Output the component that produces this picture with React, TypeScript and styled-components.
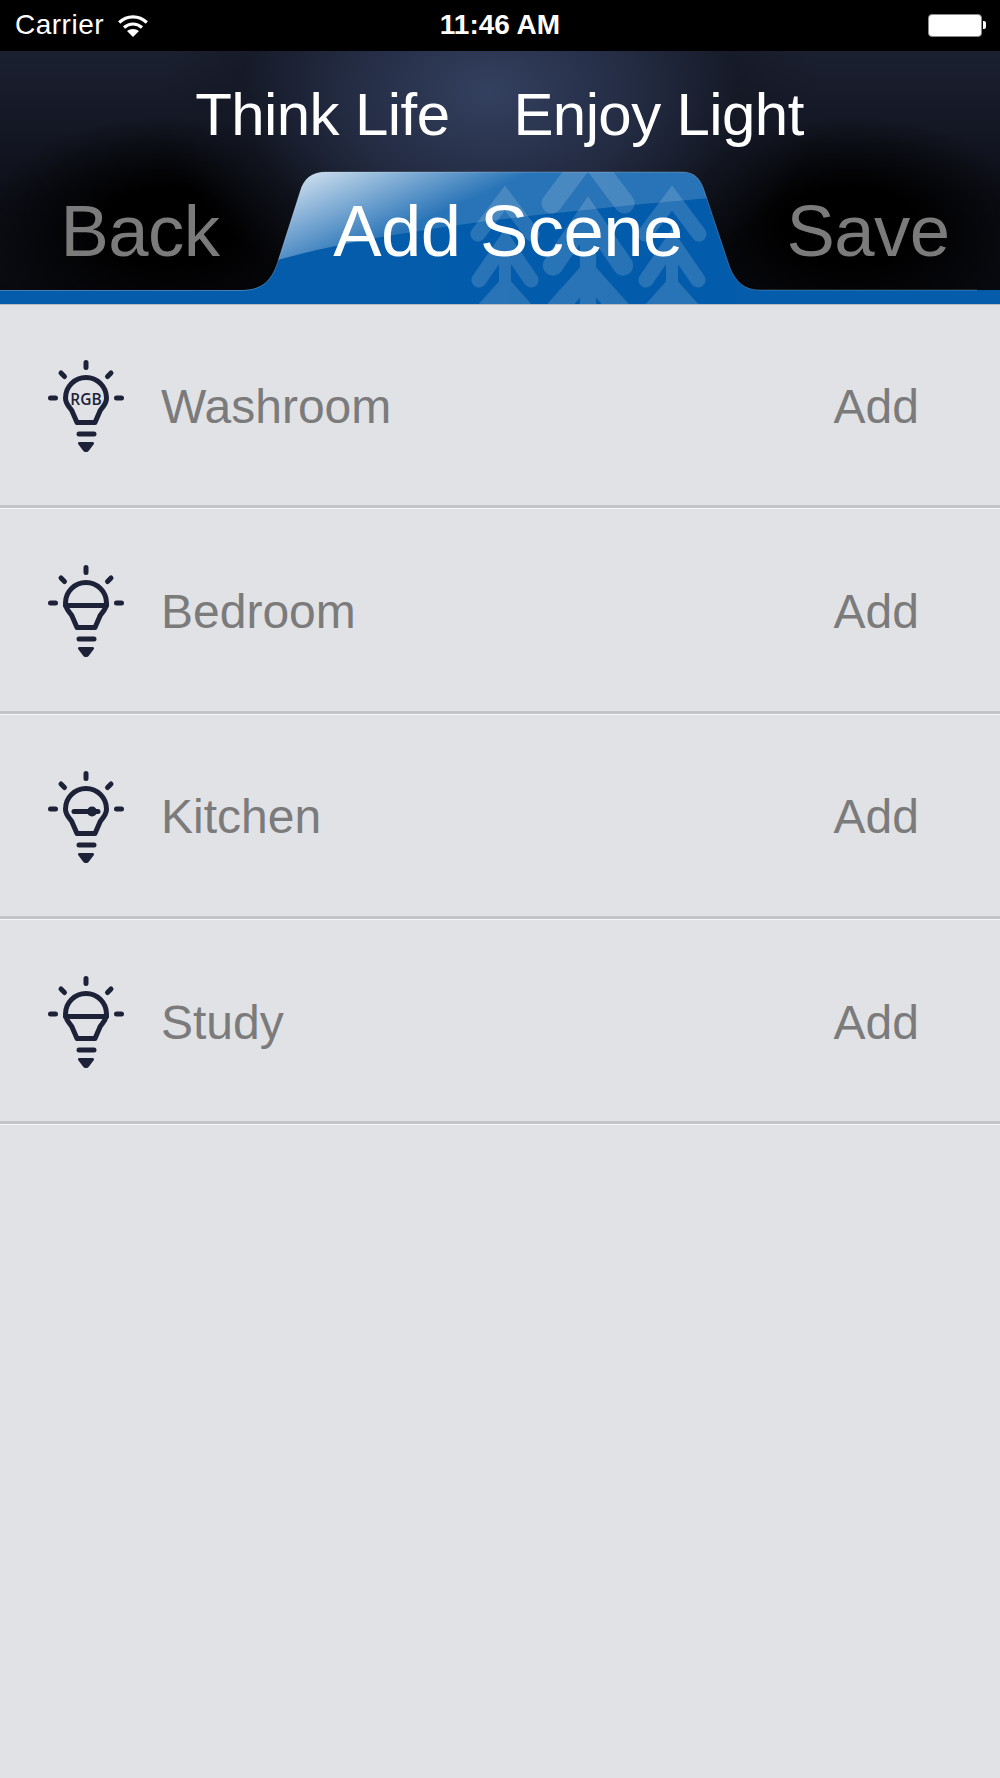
import styled, { createGlobalStyle } from "styled-components";

const GlobalStyle = createGlobalStyle`
  html, body {
    margin: 0;
    padding: 0;
    background: #e1e2e6;
    font-family: "Liberation Sans", Arial, sans-serif;
  }
`;

const Page = styled.div`
  width: 1000px;
  height: 1778px;
  overflow: hidden;
  background: #e1e2e6;
`;

const StatusBar = styled.div`
  height: 51px;
  background: #000;
  color: #fff;
  display: flex;
  align-items: center;
  justify-content: space-between;
  padding: 0 14px 1px 15px;
  box-sizing: border-box;
  position: relative;
`;

const StatusLeft = styled.div`
  display: flex;
  align-items: center;
  gap: 14px;
  font-size: 28px;
  letter-spacing: 0.5px;
`;

const Clock = styled.div`
  position: absolute;
  left: 0;
  right: 0;
  text-align: center;
  font-size: 28px;
  font-weight: 700;
`;

const Battery = styled.div`
  display: flex;
  align-items: center;
  gap: 1px;
`;

const BatteryBody = styled.div`
  width: 54px;
  height: 23px;
  box-sizing: border-box;
  background: #fff;
  border: 1px solid #8a8a8a;
  border-radius: 4px;
`;

const BatteryCap = styled.div`
  width: 3px;
  height: 8px;
  background: #fff;
  border-radius: 0 2px 2px 0;
`;

const Header = styled.header`
  position: relative;
  height: 254px;
  box-sizing: border-box;
  overflow: hidden;
  border-bottom: 1px solid #b9bbc0;
  background:
    radial-gradient(ellipse 330px 230px at 490px 40px, #33405f 0%, #232b42 45%, rgba(20, 24, 36, 0.6) 75%, transparent 100%),
    radial-gradient(ellipse 190px 110px at 170px 175px, #000 35%, transparent 100%),
    radial-gradient(ellipse 190px 110px at 850px 175px, #000 35%, transparent 100%),
    linear-gradient(#1b2031, #0d0f18 60%, #08090e);
`;

const TabArt = styled.svg`
  position: absolute;
  left: 0;
  top: 0;
`;

const Slogan = styled.div`
  position: relative;
  display: flex;
  justify-content: center;
  gap: 64px;
  padding-top: 33px;
  margin-left: -1px;
  color: #fff;
  font-size: 60px;
  line-height: 61px;
  letter-spacing: -0.6px;
`;

const NavRow = styled.nav`
  position: relative;
  display: grid;
  grid-template-columns: 280px 456px 264px;
  margin-top: 48px;
  font-size: 72.5px;
  line-height: 76px;
  letter-spacing: -0.6px;
`;

const NavItem = styled.div<{ $active?: boolean }>`
  text-align: center;
  color: ${(p) => (p.$active ? "#fff" : "#7b7b7b")};
`;

const List = styled.div`
  display: flex;
  flex-direction: column;
  margin-top: -2px;
`;

const Row = styled.div`
  height: 205.3px;
  box-sizing: border-box;
  display: flex;
  align-items: center;
  padding: 4px 81px 0 46px;
  border-bottom: 3px solid #c3c4c5;
  box-shadow: 0 1px 0 #f7f7f8;
  color: #7b7b7b;
  font-size: 48px;
`;

const Bulb = styled.svg`
  width: 80px;
  height: 96px;
  flex: none;
  margin-right: 35px;
`;

const RowName = styled.div`
  flex: 1;
`;

const bulbStroke = "#1d2238";

const Wifi = () => (
  <svg width="30" height="23" viewBox="0 0 30 23" fill="none" stroke="#fff" strokeWidth="3.2">
    <path d="M1.2 8.500C9 1 21 1 28.800 8.500" />
    <path d="M6 13.500C11.500 8.800 18.500 8.800 24 13.500" />
    <path d="M15 23l-6-6c3.500-2.800 8.500-2.800 12 0z" fill="#fff" stroke="none" />
  </svg>
);

type BulbKind = "rgb" | "half" | "dimmer";

const BulbIcon = ({ kind }: { kind: BulbKind }) => (
  <Bulb viewBox="0 0 80 96" fill="none" stroke={bulbStroke} strokeLinecap="round" strokeLinejoin="round">
    <g strokeWidth="5">
      <path d="M40 4.500v5M15 15l3.500 3.500M65 15l-3.500 3.500M4.500 40h5M70.500 40h5" />
      <path d="M33 76h15" />
      <path d="M31 64.500h18l5-11.500c1-3 6.500-6 6.500-13a20.500 20.500 0 0 0-41 0c0 7 5.500 10 6.500 13z" />
      {kind === "half" && <path d="M19.500 42.500h41" />}
      {kind === "dimmer" && <path d="M28 42.500h24" />}
    </g>
    {kind === "dimmer" && <circle cx="46" cy="42.500" r="5" fill={bulbStroke} stroke="none" />}
    {kind === "rgb" && (
      <text x="40" y="47" textAnchor="middle" fontFamily="'Open Sans', sans-serif" fontSize="15.500" fontWeight="600" fill={bulbStroke} stroke="none">
        RGB
      </text>
    )}
    <path d="M33.500 84h13c1.500 0 2 1.200 1.200 2.300l-4.700 6.200c-1.500 2-4.500 2-6 0l-4.700-6.200c-.8-1.100-.3-2.300 1.200-2.300z" fill={bulbStroke} stroke="none" />
  </Bulb>
);

const Tree = ({ x, y, scale }: { x: number; y: number; scale: number }) => (
  <g transform={`translate(${x} ${y}) scale(${scale})`} opacity="0.15">
    <g fill="none" stroke="#fff" strokeWidth="15" strokeLinecap="round" strokeLinejoin="miter">
      <path d="M-27 44L0 8L27 44" />
      <path d="M-26 90L0 52L26 90" />
      <path d="M-34 134L0 96L34 134" />
    </g>
    <path d="M-6 60H6V130H-6Z" fill="#fff" />
  </g>
);

const tabPath =
  "M0 290H240C262 290 272 282 279 258L300 192C304 178 312 172 326 172H682C694 172 700 178 704 190L730 268C736 282 744 290 760 290H1000V305H0Z";

const TabShape = () => (
  <TabArt width="1000" height="254" viewBox="0 51 1000 254">
    <defs>
      <clipPath id="tab-clip">
        <path d={tabPath} />
      </clipPath>
      <linearGradient id="tab-gloss" x1="290" y1="172" x2="330" y2="262" gradientUnits="userSpaceOnUse">
        <stop offset="0" stopColor="#fff" stopOpacity="0.85" />
        <stop offset="1" stopColor="#fff" stopOpacity="0.15" />
      </linearGradient>
    </defs>
    <path d={tabPath} fill="#045cab" />
    <g clipPath="url(#tab-clip)">
      <Tree x={505} y={190} scale={1} />
      <Tree x={588} y={144} scale={1.35} />
      <Tree x={672} y={190} scale={1} />
      <path d="M270 172H720V197C600 208 400 225 270 262Z" fill="url(#tab-gloss)" />
    </g>
    <path d="M0 290.500H240C262 290.500 272 282 279 258L300 192C304 178 312 172 326 172H682C694 172 700 178 704 190L730 268C736 282 744 290 760 290H977" fill="none" stroke="#fff" strokeOpacity="0.22" />
  </TabArt>
);

const rooms: { name: string; kind: BulbKind }[] = [
  { name: "Washroom", kind: "rgb" },
  { name: "Bedroom", kind: "half" },
  { name: "Kitchen", kind: "dimmer" },
  { name: "Study", kind: "half" },
];

export default function App() {
  return (
    <Page>
      <GlobalStyle />
      <StatusBar>
        <StatusLeft>
          Carrier
          <Wifi />
        </StatusLeft>
        <Clock>11:46 AM</Clock>
        <Battery>
          <BatteryBody />
          <BatteryCap />
        </Battery>
      </StatusBar>
      <Header>
        <TabShape />
        <Slogan>
          <span>Think Life</span>
          <span>Enjoy Light</span>
        </Slogan>
        <NavRow>
          <NavItem>Back</NavItem>
          <NavItem $active>Add Scene</NavItem>
          <NavItem>Save</NavItem>
        </NavRow>
      </Header>
      <List>
        {rooms.map((room) => (
          <Row key={room.name}>
            <BulbIcon kind={room.kind} />
            <RowName>{room.name}</RowName>
            <span>Add</span>
          </Row>
        ))}
      </List>
    </Page>
  );
}
